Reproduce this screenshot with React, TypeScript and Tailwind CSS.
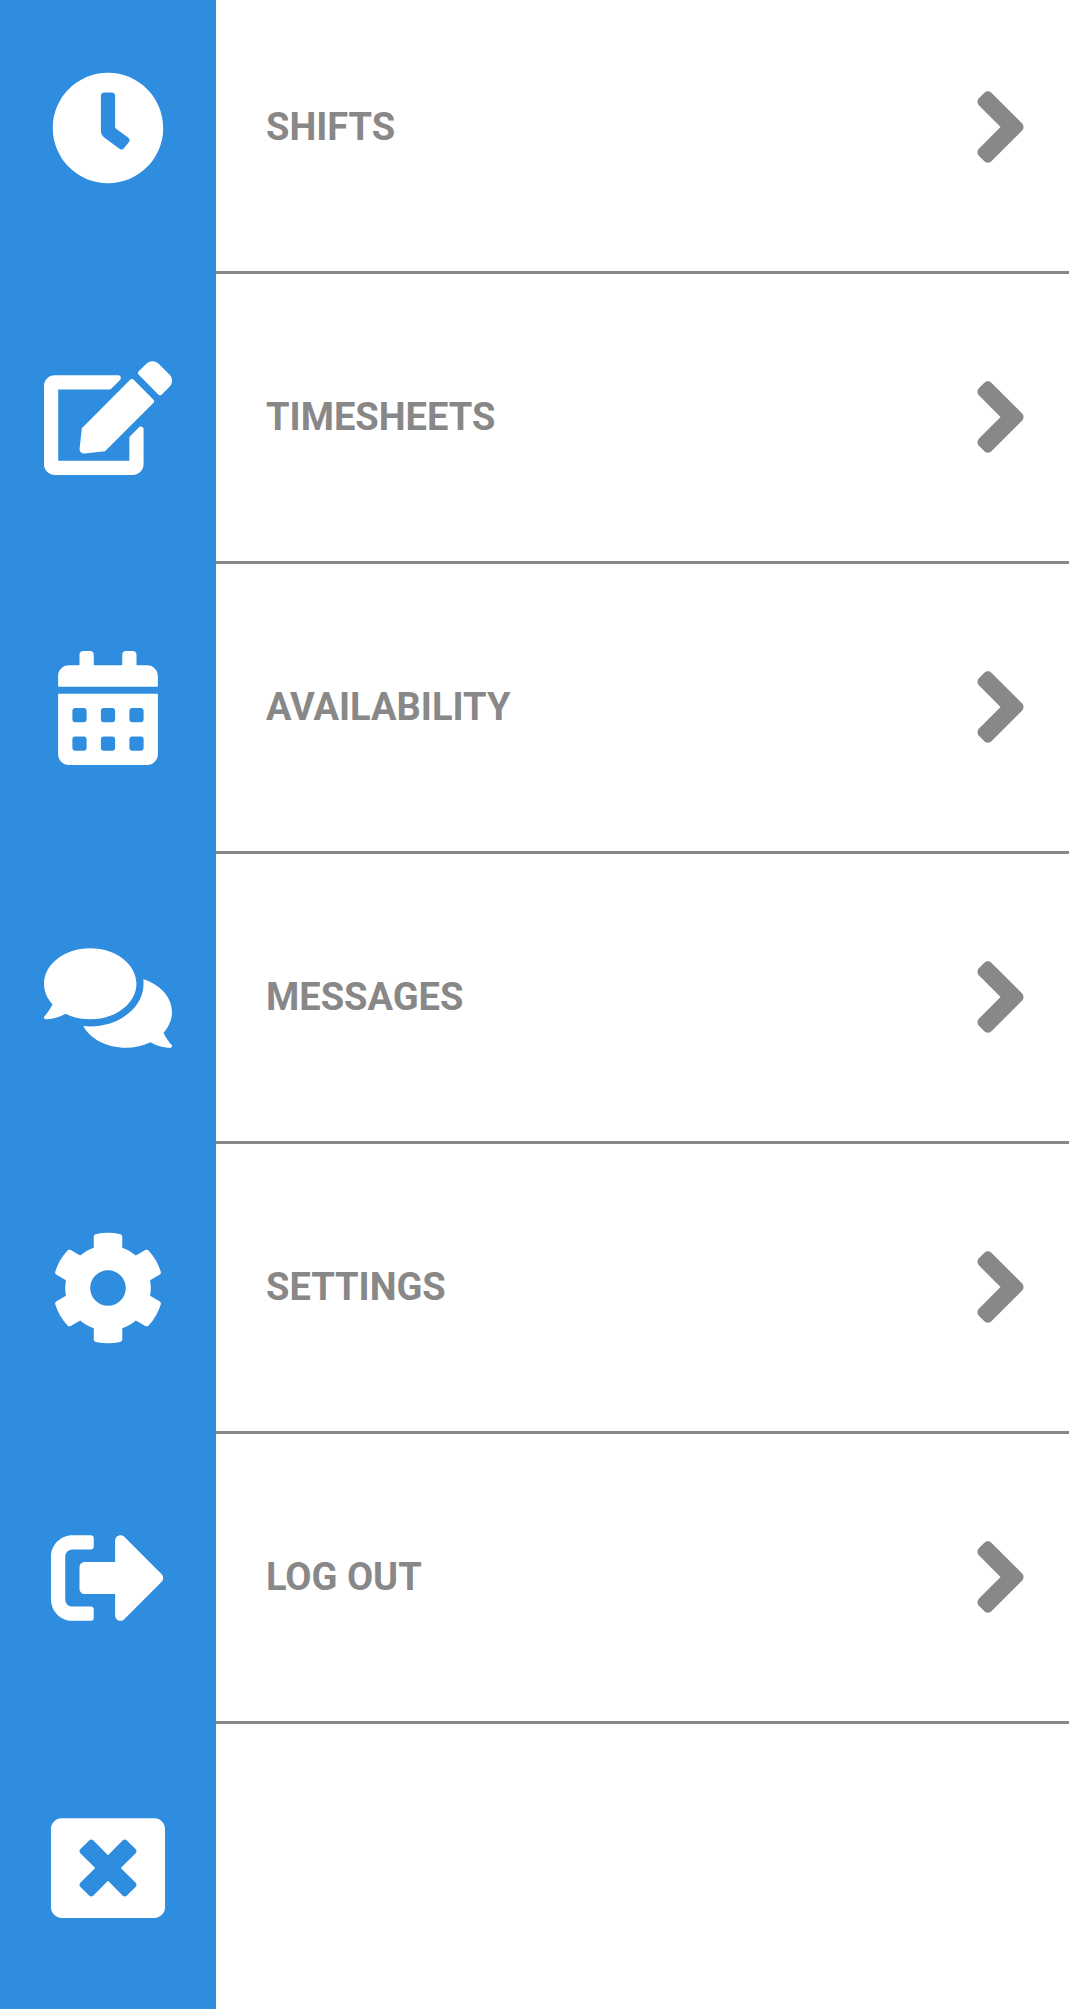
import {
  FaAngleRight,
  FaCalendarAlt,
  FaClock,
  FaCog,
  FaComments,
  FaEdit,
  FaSignOutAlt,
  FaWindowClose,
} from "react-icons/fa";

const items = [
  { label: "SHIFTS", Icon: FaClock },
  { label: "TIMESHEETS", Icon: FaEdit },
  { label: "AVAILABILITY", Icon: FaCalendarAlt },
  { label: "MESSAGES", Icon: FaComments },
  { label: "SETTINGS", Icon: FaCog },
  { label: "LOG OUT", Icon: FaSignOutAlt },
];

export default function App() {
  return (
    <nav className="flex min-h-screen flex-col bg-white font-['Roboto',sans-serif]">
      <ul>
        {items.map(({ label, Icon }) => (
          <li key={label} className="group">
            <a href="#" className="flex">
              <span className="flex w-[216px] shrink-0 justify-center bg-[#2e8ddf] pt-[87px] pb-[89px] text-white group-first:pt-[71px]">
                <Icon className="h-[114px] w-[128px]" aria-hidden="true" />
              </span>
              <span className="flex grow items-center justify-between border-b-3 border-[#888888] pt-[87px] pr-10 pb-[89px] pl-[50px] text-[#888888] group-first:pt-[71px]">
                <span className="text-[38px] leading-[44px] font-bold">{label}</span>
                <FaAngleRight className="-my-1 h-[114px] w-[57px] shrink-0" aria-hidden="true" />
              </span>
            </a>
          </li>
        ))}
      </ul>
      <div className="flex w-[216px] grow items-start justify-center bg-[#2e8ddf] pt-[87px] text-white">
        <button type="button" aria-label="Close menu">
          <FaWindowClose className="h-[114px] w-[128px]" aria-hidden="true" />
        </button>
      </div>
    </nav>
  );
}
